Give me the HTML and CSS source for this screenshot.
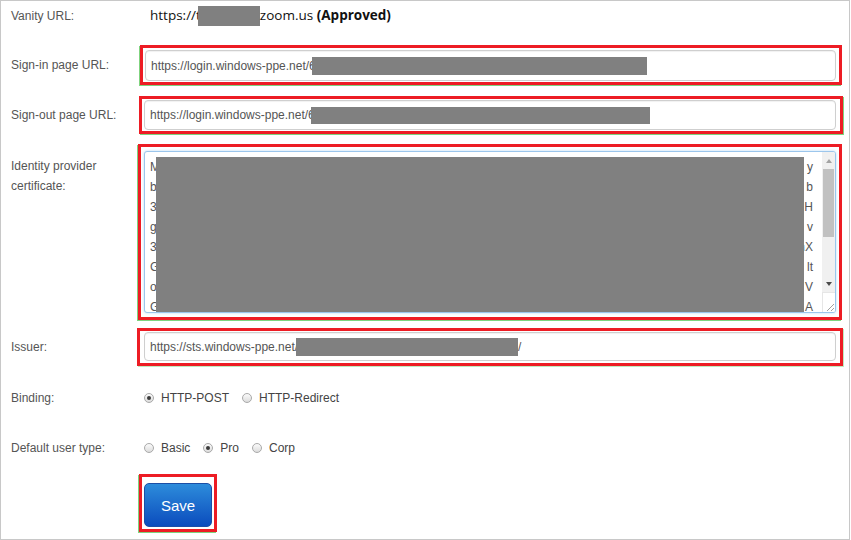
FILE: index.html
```html
<!DOCTYPE html>
<html>
<head>
<meta charset="utf-8">
<link rel="stylesheet" href="styles.css">
</head>
<body>
<div class="panel">
  <div class="row row-vanity">
    <span class="label">Vanity URL:</span>
    <span class="vanity">https://t<span class="redact redact-vanity"></span>zoom.us <b>(Approved)</b></span>
  </div>

  <div class="row row-signin">
    <span class="label">Sign-in page URL:</span>
    <div class="mark mark-signin">
      <div class="input input-signin">https://login.windows-ppe.net/6<span class="redact redact-signin"></span></div>
    </div>
  </div>

  <div class="row row-signout">
    <span class="label">Sign-out page URL:</span>
    <div class="mark mark-signout">
      <div class="input input-signout">https://login.windows-ppe.net/6<span class="redact redact-signout"></span></div>
    </div>
  </div>

  <div class="row row-cert">
    <span class="label label-cert">Identity provider<br>certificate:</span>
    <div class="mark mark-cert">
      <div class="textarea">
        <div class="ta-text">
          <div class="ta-line"><span>M</span><span>y</span></div>
          <div class="ta-line"><span>b</span><span>b</span></div>
          <div class="ta-line"><span>3</span><span>H</span></div>
          <div class="ta-line"><span>g</span><span>v</span></div>
          <div class="ta-line"><span>3</span><span>nX</span></div>
          <div class="ta-line"><span>G</span><span>lt</span></div>
          <div class="ta-line"><span>o</span><span>V</span></div>
          <div class="ta-line"><span>G</span><span>A</span></div>
        </div>
        <div class="scrollbar">
          <div class="sb-btn sb-up"><span class="tri-up"></span></div>
          <div class="sb-thumb"></div>
          <div class="sb-track"></div>
          <div class="sb-btn sb-down"><span class="tri-down"></span></div>
          <div class="sb-corner">
            <svg width="13" height="20" viewBox="0 0 13 20"><path d="M4 18 L11 11 M8 18 L11 15" stroke="#a0a0a0" stroke-width="1" fill="none"/></svg>
          </div>
        </div>
        <div class="cert-cover"></div>
      </div>
    </div>
  </div>

  <div class="row row-issuer">
    <span class="label">Issuer:</span>
    <div class="mark mark-issuer">
      <div class="input input-issuer">https://sts.windows-ppe.net/<span class="redact redact-issuer"></span>/</div>
    </div>
  </div>

  <div class="row row-radio row-binding">
    <span class="label">Binding:</span>
    <div class="options">
      <span class="radio checked"></span><span class="opt">HTTP-POST</span>
      <span class="radio"></span><span class="opt">HTTP-Redirect</span>
    </div>
  </div>

  <div class="row row-radio row-usertype">
    <span class="label">Default user type:</span>
    <div class="options">
      <span class="radio"></span><span class="opt">Basic</span>
      <span class="radio checked"></span><span class="opt">Pro</span>
      <span class="radio"></span><span class="opt">Corp</span>
    </div>
  </div>

  <div class="row row-save">
    <span class="label"></span>
    <div class="mark mark-save">
      <button class="save-btn">Save</button>
    </div>
  </div>
</div>
</body>
</html>
```

FILE: styles.css
```css
html, body {
  margin: 0;
  padding: 0;
  background: #ffffff;
}

.panel {
  box-sizing: border-box;
  width: 850px;
  height: 540px;
  border: 1px solid #c8c8c8;
  padding-left: 10px;
  font-family: "Liberation Sans", Arial, sans-serif;
  font-size: 12px;
  color: #555;
  background: #fff;
}

.row {
  display: flex;
  align-items: center;
}

.label {
  flex: none;
  width: 127px;
  font-size: 12px;
  color: #555;
  line-height: 20px;
}

.row-vanity {
  height: 30px;
}

.vanity {
  margin-left: 12px;
  font-family: "Open Sans", sans-serif;
  font-size: 13.5px;
  color: #111;
  white-space: nowrap;
}

.vanity b {
  font-weight: 700;
}

.redact {
  display: inline-block;
  background: #808080;
  vertical-align: middle;
}

.redact-vanity {
  width: 62px;
  height: 20px;
  margin-left: -3px;
  vertical-align: -6px;
}

.mark {
  box-sizing: border-box;
  flex: 1;
  border: 3px solid #ed1c24;
  margin-right: 7px;
  padding: 1px 3px;
  box-shadow: -1px 1px 0 #7fd37f;
}

.row-signin { margin-top: 14px; }
.mark-signin {
  margin-left: 2px;
  padding: 2px 3px 1px 2px;
}

.row-signout { margin-top: 11px; }
.mark-signout {
  margin-left: 1px;
  margin-right: 6px;
  padding: 1px 4px 1px 2px;
  box-shadow: 1px 1px 0 #7fd37f;
}

.input {
  box-sizing: border-box;
  height: 30px;
  border: 1px solid #cfcfcf;
  border-radius: 4px;
  box-shadow: inset 0 1px 1px rgba(0, 0, 0, 0.06);
  background: #fff;
  padding-left: 5px;
  display: flex;
  align-items: center;
  font-size: 12px;
  color: #555;
  white-space: nowrap;
  overflow: hidden;
}

.input-signin { height: 31px; }

.redact-signin {
  width: 335px;
  height: 18px;
  margin-left: -4px;
}

.redact-signout {
  width: 339px;
  height: 17px;
  margin-left: -4px;
}

.row-cert {
  margin-top: 10px;
  align-items: flex-start;
}

.label-cert {
  margin-top: 12px;
}

.mark-cert {
  padding: 4px 3px;
}

.textarea {
  position: relative;
  box-sizing: border-box;
  height: 162px;
  border: 1px solid #9cc6ec;
  border-radius: 3px;
  box-shadow: 0 0 3px #b9daf5;
  display: flex;
  overflow: hidden;
  background: #fff;
}

.ta-text {
  flex: 1;
  padding: 5px 9px 0 5px;
  overflow: hidden;
  font-size: 12px;
  color: #555;
  line-height: 20px;
}

.ta-line {
  display: flex;
  justify-content: space-between;
}

.cert-cover {
  position: absolute;
  left: 11px;
  top: 5px;
  width: 648px;
  bottom: -1px;
  background: #808080;
}

.scrollbar {
  flex: none;
  width: 13px;
  display: flex;
  flex-direction: column;
  background: #f0f0f0;
}

.sb-btn {
  height: 17px;
  display: flex;
  align-items: center;
  justify-content: center;
}

.tri-up {
  width: 0;
  height: 0;
  border-left: 3px solid transparent;
  border-right: 3px solid transparent;
  border-bottom: 4px solid #a3a3a3;
}

.tri-down {
  width: 0;
  height: 0;
  border-left: 3px solid transparent;
  border-right: 3px solid transparent;
  border-top: 4px solid #4a4a4a;
}

.sb-thumb {
  height: 68px;
  width: 11px;
  margin-left: 1px;
  background: #c1c1c1;
}

.sb-track {
  flex: 1;
}

.sb-corner {
  height: 20px;
  background: #fff;
  border-left: 1px solid #e6e6e6;
  border-top: 1px solid #e6e6e6;
  box-sizing: border-box;
  line-height: 0;
}

.row-issuer { margin-top: 8px; }

.mark-issuer {
  margin-left: -1px;
  margin-right: 6px;
  padding: 1px 4px 2px 4px;
  box-shadow: 1px 1px 0 #bfeabf;
}

.input-issuer { height: 29px; }

.redact-issuer {
  width: 222px;
  height: 18px;
  margin-left: -2px;
}

.row-radio {
  height: 20px;
}

.row-binding { margin-top: 22px; }
.row-usertype { margin-top: 30px; }

.options {
  display: flex;
  align-items: center;
  margin-left: 6px;
}

.radio {
  box-sizing: border-box;
  width: 10px;
  height: 10px;
  border-radius: 50%;
  border: 1px solid #a9a9a9;
  background: linear-gradient(#fbfbfb, #dcdcdc);
  position: relative;
  flex: none;
}

.radio.checked::after {
  content: "";
  position: absolute;
  left: 2px;
  top: 2px;
  width: 4px;
  height: 4px;
  border-radius: 50%;
  background: #3a3a3a;
}

.opt {
  margin-left: 7px;
  margin-right: 13px;
  font-size: 12px;
  color: #444;
}

.row-save {
  margin-top: 16px;
}

.mark-save {
  flex: none;
  margin-left: 1px;
  padding: 6px 2px 2px 2px;
}

.save-btn {
  display: block;
  box-sizing: border-box;
  width: 68px;
  height: 44px;
  border: 1px solid #1b4fa6;
  border-radius: 5px;
  background: linear-gradient(#2d8cdb, #0b4cbd);
  color: #fff;
  font-family: "Liberation Sans", Arial, sans-serif;
  font-size: 15px;
  padding: 0;
}
```
